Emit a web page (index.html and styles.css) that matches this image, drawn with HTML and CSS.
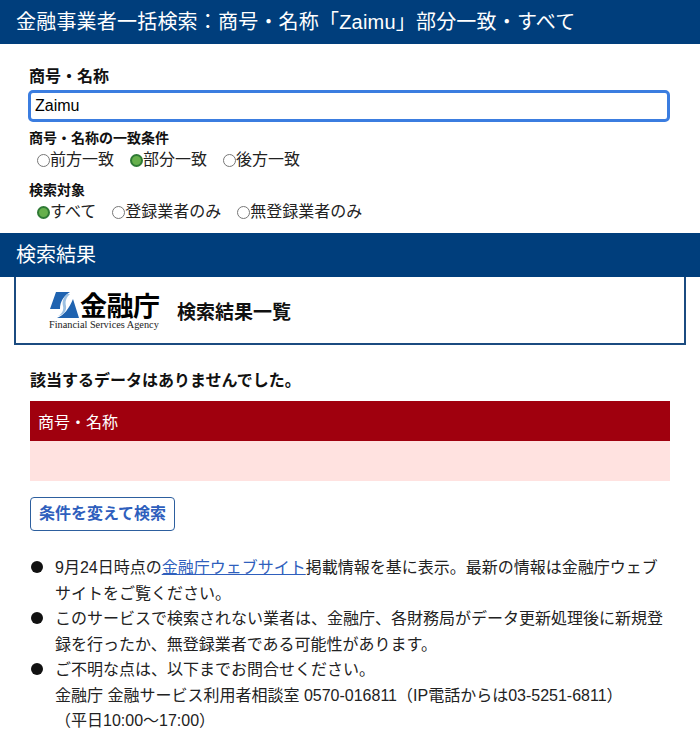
FILE: index.html
```html
<!DOCTYPE html>
<html lang="ja">
<head>
    <meta charset="UTF-8">
    <meta name="viewport" content="width=device-width, initial-scale=1.0">
    <title>金融事業者一括検索</title>
    <link rel="stylesheet" href="styles.css">
</head>
<body>

    <h1 class="bar title-bar">金融事業者一括検索：商号・名称「Zaimu」部分一致・すべて</h1>

    <form class="search">
        <label class="field-label" for="name">商号・名称</label>
        <input class="name-input" type="text" id="name" value="Zaimu">

        <div class="group-label first">商号・名称の一致条件</div>
        <div class="radios">
            <label class="radio"><span class="dot"></span>前方一致</label>
            <label class="radio"><span class="dot on"></span>部分一致</label>
            <label class="radio"><span class="dot"></span>後方一致</label>
        </div>

        <div class="group-label second">検索対象</div>
        <div class="radios">
            <label class="radio"><span class="dot on"></span>すべて</label>
            <label class="radio"><span class="dot"></span>登録業者のみ</label>
            <label class="radio"><span class="dot"></span>無登録業者のみ</label>
        </div>
    </form>

    <h2 class="bar result-bar">検索結果</h2>

    <div class="agency-box">
        <div class="logo">
            <div class="logo-top">
                <svg class="logo-mark" width="30" height="28" viewBox="0 0 30 28">
                    <path d="M7 1H21C15 5 11 10 11 18H1Z" fill="#1f63b0"/>
                    <path d="M24 8L30 27H8C15 24 20 18 24 8Z" fill="#1f63b0"/>
                    <path d="M18 3C14 7 13 11 14 15C15 19 13 23 9 25C14 24 18 20 17 15C16 10 17 7 21 3Z" fill="#9cc0e2"/>
                </svg>
                <span class="logo-name">金融庁</span>
            </div>
            <div class="logo-en">Financial Services Agency</div>
        </div>
        <div class="agency-heading">検索結果一覧</div>
    </div>

    <div class="results">
        <p class="no-data">該当するデータはありませんでした。</p>
        <table class="result-table">
            <thead>
                <tr><th>商号・名称</th></tr>
            </thead>
            <tbody>
                <tr><td></td></tr>
            </tbody>
        </table>
        <a class="change-button" href="#">条件を変えて検索</a>

        <ul class="notes">
            <li>9月24日時点の<a href="#">金融庁ウェブサイト</a>掲載情報を基に表示。最新の情報は金融庁ウェブサイトをご覧ください。</li>
            <li>このサービスで検索されない業者は、金融庁、各財務局がデータ更新処理後に新規登録を行ったか、無登録業者である可能性があります。</li>
            <li>ご不明な点は、以下までお問合せください。<br>金融庁 金融サービス利用者相談室 0570-016811（IP電話からは03-5251-6811）<br>（平日10:00～17:00）</li>
        </ul>
    </div>

</body>
</html>
```

FILE: styles.css
```css
body {
    margin: 0;
    font-family: "Liberation Sans", "Noto Sans CJK JP", sans-serif;
    color: #111;
    background-color: #fff;
    overflow: hidden;
}

.bar {
    margin: 0;
    height: 44px;
    padding-left: 16px;
    background-color: #003e7c;
    color: #fff;
    font-size: 20px;
    font-weight: normal;
    line-height: 44px;
}

.title-bar {
    letter-spacing: 0.2px;
}

.search {
    padding: 21px 30px 0 29px;
}

.field-label {
    display: block;
    font-size: 16px;
    font-weight: bold;
    line-height: 24px;
}

.name-input {
    display: block;
    box-sizing: border-box;
    width: 642px;
    height: 32px;
    margin: 1px 0 0 -1px;
    padding: 0 4px;
    border: 3px solid #3b7de0;
    border-radius: 5px;
    outline: none;
    font-family: inherit;
    font-size: 16px;
    color: #000;
}

.group-label {
    font-size: 14px;
    font-weight: bold;
    line-height: 20px;
}

.group-label.first {
    margin-top: 6px;
}

.group-label.second {
    margin-top: 8px;
}

.radios {
    display: flex;
    gap: 16px;
    padding-left: 8px;
    height: 24px;
    font-size: 16px;
    line-height: 24px;
}

.radio {
    display: flex;
    align-items: center;
    color: #222;
}

.dot {
    box-sizing: border-box;
    width: 13px;
    height: 13px;
    border: 1px solid #777;
    border-radius: 50%;
    background-color: #fff;
}

.dot.on {
    border: 2px solid #2f7a35;
    background-color: #66b04c;
}

.result-bar {
    margin-top: 9px;
}

.agency-box {
    display: flex;
    align-items: center;
    box-sizing: border-box;
    width: 672px;
    height: 68px;
    margin-left: 14px;
    padding-left: 33px;
    border: 2px solid #1b4b80;
    border-top: none;
}

.logo {
    width: 110px;
    margin-top: 1px;
}

.logo-top {
    display: flex;
    align-items: center;
    gap: 1px;
    height: 28px;
}

.logo-mark {
    flex: none;
}

.logo-name {
    font-family: "Noto Sans CJK JP", sans-serif;
    font-size: 27px;
    font-weight: bold;
    line-height: 28px;
    letter-spacing: -0.5px;
    white-space: nowrap;
    color: #000;
}

.logo-en {
    font-family: "Liberation Serif", serif;
    font-size: 10.3px;
    line-height: 12px;
    white-space: nowrap;
    color: #222;
}

.agency-heading {
    margin-left: 18px;
    font-size: 19px;
    font-weight: bold;
}

.results {
    padding: 0 30px;
}

.no-data {
    margin: 24px 0 8px 0;
    font-size: 16px;
    font-weight: bold;
    line-height: 24px;
}

.result-table {
    width: 100%;
    border-collapse: collapse;
}

.result-table th {
    height: 40px;
    padding: 0 8px;
    background-color: #a0000e;
    color: #fff;
    font-size: 16px;
    font-weight: normal;
    text-align: left;
}

.result-table td {
    height: 40px;
    padding: 0;
    background-color: #ffe2e0;
}

.change-button {
    display: block;
    box-sizing: border-box;
    width: 145px;
    height: 34px;
    margin-top: 16px;
    border: 1px solid #2d5f9e;
    border-radius: 4px;
    color: #2f5fbd;
    font-size: 16px;
    font-weight: bold;
    line-height: 31px;
    text-align: center;
    text-decoration: none;
}

.notes {
    margin: 24px 0 0;
    padding: 0 0 0 25px;
    list-style: none;
    font-size: 16px;
    line-height: 25.5px;
    color: #222;
}

.notes li {
    position: relative;
}

.notes li::before {
    content: "";
    position: absolute;
    left: -24px;
    top: 6px;
    width: 12px;
    height: 12px;
    border-radius: 50%;
    background-color: #111;
}

.notes a {
    color: #2f5fbd;
}
```
